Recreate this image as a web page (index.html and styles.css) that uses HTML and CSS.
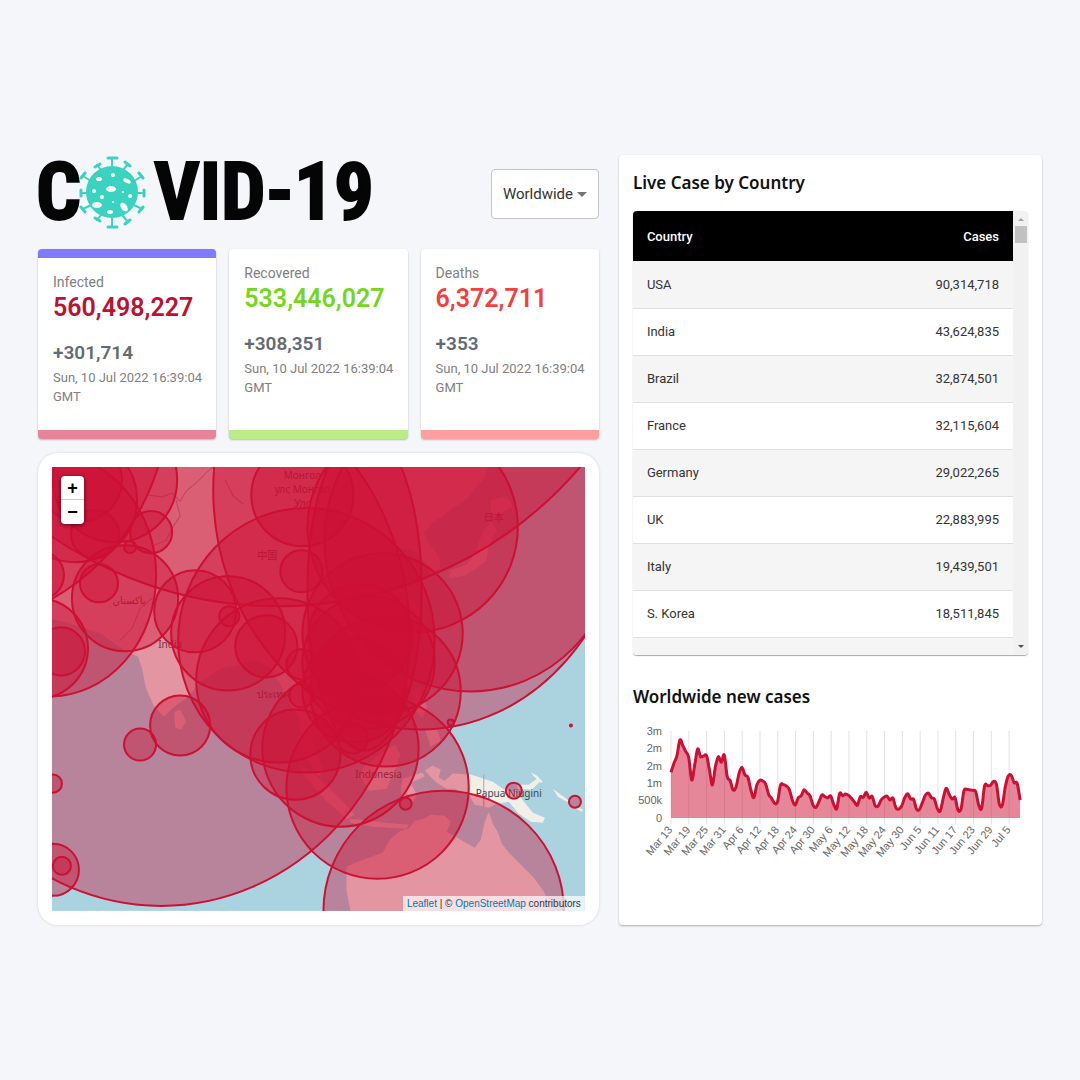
FILE: index.html
```html
<!DOCTYPE html>
<html lang="en">
<head>
<meta charset="utf-8">
<meta name="viewport" content="width=device-width, initial-scale=1">
<title>COVID-19 Tracker</title>
<link rel="stylesheet" href="styles.css">
</head>
<body>
<div class="app">
  <main class="app-left">
    <header class="app-header">
      <h1 class="logo" aria-label="COVID-19">
        <span class="logo-c">C</span>
        <svg class="logo-virus" viewBox="0 0 67 73" aria-hidden="true">
          <circle cx="33" cy="36" r="26" fill="#3ad3c0"/>
          <g stroke="#3ad3c0" stroke-width="2" stroke-linecap="round" fill="none">
            <path d="M33 12V2M33 60V71M9 37H2M58 37h7"/>
            <path d="M12 25L4 20M55 25l8-5M12 49l-8 4M55 49l8 4"/>
            <path d="M22 14l-4-5M44 14l5-6M22 59l-4 5M44 60l5 6"/>
          </g>
          <g stroke="#3ad3c0" stroke-width="3" stroke-linecap="round" fill="none">
            <path d="M29 2h9M29 71h9M2 34v6M65 34v6"/>
            <path d="M2 22L6 17M60 17l4 5M2 51l4 5M64 51l-4 5"/>
            <path d="M16 11l5-3M46 6l5 4M16 62l5 3M46 68l5-4"/>
          </g>
          <g fill="#fff">
            <ellipse cx="32" cy="33" rx="5" ry="3"/><ellipse cx="20" cy="23" rx="3" ry="2"/>
            <ellipse cx="34" cy="19" rx="2" ry="2"/><ellipse cx="48" cy="25" rx="4" ry="2" transform="rotate(25 48 25)"/>
            <ellipse cx="18" cy="49" rx="5" ry="3"/><ellipse cx="45" cy="51" rx="3" ry="5" transform="rotate(-35 45 51)"/>
            <ellipse cx="23" cy="41" rx="2" ry="2"/><ellipse cx="51" cy="40" rx="2" ry="2"/>
            <ellipse cx="31" cy="56" rx="3" ry="2"/><circle cx="15" cy="35" r="2"/><circle cx="44" cy="36" r="1"/><circle cx="34" cy="46" r="1"/>
          </g>
        </svg>
        <span>VID-19</span>
      </h1>
      <div class="picker">
        <select class="picker-select" aria-label="Country">
          <option>Worldwide</option>
        </select>
        <svg class="picker-arrow" viewBox="0 0 10 5" aria-hidden="true"><path d="M0 0h10L5 5z" fill="#757575"/></svg>
      </div>
    </header>

    <section class="stats">
      <article class="stat stat-infected">
        <h2 class="stat-label">Infected</h2>
        <p class="stat-total">560,498,227</p>
        <p class="stat-today">+301,714</p>
        <p class="stat-date">Sun, 10 Jul 2022 16:39:04 GMT</p>
      </article>
      <article class="stat stat-recovered">
        <h2 class="stat-label">Recovered</h2>
        <p class="stat-total">533,446,027</p>
        <p class="stat-today">+308,351</p>
        <p class="stat-date">Sun, 10 Jul 2022 16:39:04 GMT</p>
      </article>
      <article class="stat stat-deaths">
        <h2 class="stat-label">Deaths</h2>
        <p class="stat-total">6,372,711</p>
        <p class="stat-today">+353</p>
        <p class="stat-date">Sun, 10 Jul 2022 16:39:04 GMT</p>
      </article>
    </section>

    <section class="map-card">
      <div class="map">
        <svg class="map-canvas" viewBox="52 467 532 443" preserveAspectRatio="xMidYMid slice" role="img" aria-label="Map of cases">
          <rect x="52" y="467" width="532" height="443" fill="#aad3df"/>
          <g fill="#f2efe9">
            <path d="M40 460H487L484 478 473 490 466 499 450 510 432 523 423 533 430 545 438 556 440 568 430 574 424 562 414 552 404 548 398 556 406 564 400 574 408 592 418 610 414 634 400 652 380 664 360 670 346 674 338 684 344 698 348 716 340 730 328 738 318 722 312 716 310 738 316 752 324 770 318 776 308 760 302 742 298 716 290 704 280 684 268 666 254 660 240 664 220 668 200 682 188 696 176 705 172 708 164 716 154 706 146 688 142 668 138 656 128 652 118 646 102 634 84 628 66 622 40 616z"/>
            <path d="M174 712l6-3 6 12-5 8-6-2z"/>
            <path d="M482 532l8-10 6 8-8 16-2 14-10 8-14 8-14 2 2-8 16-6 8-10 4-12zM490 500l16-4 6 10-12 8-10-2z"/>
            <path d="M298 764l14 8 26 24 16 18-8 4-20-18-20-22zM350 818l34 4 24 2-2 4-34-2-22-4zM362 768l14-12 18-12 6 10-6 16-8 18-18 2-8-14zM402 778l20-6 2 4-14 6 6 12-4 8-6-10-4 8-2-12zM410 690l10-4 6 20-4 12-8-8zM424 728l12 0 4 12-10 6zM398 652l6-4 2 12-6 4z"/>
            <path d="M424 770l8-5 8 4-2 8 6 3 8-7 18 1 22 7 10 7 14 4 8 10 8 10 12 5-2 5-12-1-12-8-10-12-12 2-8 4-14-3-6-10-14-6-8 0-10-6z"/>
            <path d="M516 784l12 0 8-6 3 3-8 8-14-1zM530 772l6 3 6 6-2 1-7-6zM552 788l8 6 8 6-2 1-9-5zM576 806l6 3-1 2-6-3z"/>
            <path d="M346 866l14-6 22-8 8-14 10-8 8-2 6-8 10-2 6-4 14 1 6 6-4 10 14 8 14 8 6-8 4-18 4-10 4 12 5 8 4 12 8 10 12 12 12 12 10 14 6 12V910H350l-4-20z"/>
            <path d="M402 832l10-2 8 2-14 3z"/>
          </g>
          <g class="map-border">
            <path d="M148 495l14 2 10-4 8 8 6-10 14-12 8-8 10-8M176 500l4 16-8 12-6 12-14 6M120 640l12-12 8-20 12-10M483 774v32M225 480l8 16 10 8"/>
          </g>
          <g class="map-label">
            <text x="302" y="479">Монгол</text>
            <text x="302" y="493">улс Монгол</text>
            <text x="302" y="507">Улс</text>
            <text x="267" y="559">中国</text>
            <text x="129" y="604">پاکستان</text>
            <text x="170" y="648">India</text>
            <text x="493" y="521">日本</text>
            <text x="273" y="698">ประเทศ</text>
            <text x="378" y="777">Indonesia</text>
            <text x="508" y="796">Papua Niugini</text>
          </g>
          <g class="map-cases">
            <ellipse cx="161" cy="635" rx="248" ry="270"/>
            <circle cx="277" cy="208" r="398"/>
            <ellipse cx="420" cy="490" rx="207" ry="239"/>
            <ellipse cx="470" cy="540" rx="146" ry="151"/>
            <ellipse cx="50" cy="575" rx="106" ry="121"/>
            <circle cx="-60" cy="400" r="228"/>
            <circle cx="443" cy="910" r="120"/>
            <ellipse cx="306" cy="640" rx="128" ry="132"/>
            <circle cx="412" cy="527" r="105"/>
            <circle cx="377" cy="787" r="91"/>
            <circle cx="278" cy="680" r="82"/>
            <circle cx="382" cy="633" r="80"/>
            <circle cx="340" cy="748" r="78"/>
            <circle cx="385" cy="691" r="75"/>
            <ellipse cx="364" cy="590" rx="57" ry="160"/>
            <circle cx="368" cy="662" r="66"/>
            <circle cx="354" cy="690" r="52"/>
            <circle cx="360" cy="636" r="52"/>
            <circle cx="115" cy="480" r="62"/>
            <circle cx="75" cy="500" r="62"/>
            <circle cx="80" cy="480" r="42"/>
            <circle cx="228" cy="633" r="57"/>
            <circle cx="125" cy="598" r="53"/>
            <circle cx="302" cy="495" r="51"/>
            <circle cx="38" cy="648" r="50"/>
            <circle cx="295" cy="754" r="45"/>
            <circle cx="195" cy="611" r="41"/>
            <circle cx="266" cy="646" r="31"/>
            <circle cx="180" cy="725" r="30"/>
            <circle cx="53" cy="869" r="26"/>
            <circle cx="95" cy="534" r="24"/>
            <circle cx="40" cy="575" r="24"/>
            <circle cx="61" cy="651" r="24"/>
            <circle cx="301" cy="571" r="21"/>
            <circle cx="151" cy="532" r="21"/>
            <circle cx="99" cy="583" r="19"/>
            <circle cx="140" cy="744" r="16"/>
            <circle cx="301" cy="664" r="15"/>
            <circle cx="352" cy="738" r="15"/>
            <circle cx="301" cy="695" r="12"/>
            <circle cx="229" cy="616" r="10"/>
            <circle cx="53" cy="783" r="9"/>
            <circle cx="62" cy="865" r="9"/>
            <circle cx="513" cy="790" r="8"/>
            <circle cx="574" cy="801" r="6"/>
            <circle cx="405" cy="803" r="6"/>
            <circle cx="130" cy="547" r="6"/>
            <circle cx="450" cy="722" r="3"/>
            <circle cx="570" cy="725" r="1"/>
          </g>
        </svg>
        <div class="map-zoom">
          <button class="map-zoom-button" type="button" aria-label="Zoom in">+</button>
          <button class="map-zoom-button" type="button" aria-label="Zoom out">−</button>
        </div>
        <p class="map-credit"><a href="#leaflet">Leaflet</a> | © <a href="#osm">OpenStreetMap</a> contributors</p>
      </div>
    </section>
  </main>

  <aside class="app-right">
    <h2 class="panel-title">Live Case by Country</h2>
    <div class="table-frame">
      <div class="table-scroll">
        <table class="cases">
          <thead><tr><th scope="col">Country</th><th scope="col">Cases</th></tr></thead>
          <tbody>
            <tr><td>USA</td><td>90,314,718</td></tr>
            <tr><td>India</td><td>43,624,835</td></tr>
            <tr><td>Brazil</td><td>32,874,501</td></tr>
            <tr><td>France</td><td>32,115,604</td></tr>
            <tr><td>Germany</td><td>29,022,265</td></tr>
            <tr><td>UK</td><td>22,883,995</td></tr>
            <tr><td>Italy</td><td>19,439,501</td></tr>
            <tr><td>S. Korea</td><td>18,511,845</td></tr>
            <tr><td></td><td></td></tr>
          </tbody>
        </table>
      </div>
      <div class="scrollbar" aria-hidden="true">
        <svg class="scrollbar-arrow" viewBox="0 0 8 4"><path d="M0 4L4 0l4 4z" fill="#a3a3a3"/></svg>
        <span class="scrollbar-thumb"></span>
        <svg class="scrollbar-arrow scrollbar-arrow-down" viewBox="0 0 8 4"><path d="M0 0h8L4 4z" fill="#505050"/></svg>
      </div>
    </div>
    <h2 class="panel-title">Worldwide new cases</h2>
    <svg class="chart" viewBox="0 5 395 140" role="img" aria-label="Worldwide new cases per day">
      <g class="chart-grid"></g>
      <path class="chart-area"/>
      <path class="chart-line"/>
      <g class="chart-y">
        <text x="29" y="15">3m</text>
        <text x="29" y="32">2m</text>
        <text x="29" y="50">2m</text>
        <text x="29" y="67">1m</text>
        <text x="29" y="84">500k</text>
        <text x="29" y="102">0</text>
      </g>
      <g class="chart-x"></g>
    </svg>
  </aside>
</div>
<script src="script.js"></script>
</body>
</html>
```

FILE: styles.css
```css
* {
  box-sizing: border-box;
  margin: 0;
}

body {
  background: #f5f6fa;
  font-family: Roboto, "Liberation Sans", sans-serif;
  color: #212121;
}

.app {
  display: grid;
  grid-template-columns: 57fr 43fr;
  gap: 20px;
  align-content: center;
  min-height: 100vh;
  padding: 20px 38px;
}

.app-left {
  display: flex;
  flex-direction: column;
  min-width: 0;
}

.app-header {
  display: flex;
  align-items: center;
  justify-content: space-between;
  height: 74px;
  margin-bottom: 20px;
}

.logo {
  display: flex;
  align-items: center;
  font-family: "Liberation Sans Narrow", "Roboto Condensed", "Open Sans Condensed", "Liberation Sans", sans-serif;
  font-size: 79px;
  font-weight: 700;
  line-height: 74px;
  color: #050505;
  -webkit-text-stroke: 2px #050505;
}

.logo-c {
  width: 43px;
  margin-left: -2px;
}

.logo-virus {
  width: 67px;
  height: 73px;
  margin-right: 8px;
}

.picker {
  position: relative;
  margin-top: 4px;
}

.picker-select {
  appearance: none;
  width: 108px;
  height: 50px;
  padding: 0 22px 0 11px;
  border: 1px solid #c4c4c4;
  border-radius: 4px;
  background: #fff;
  font: 400 15px Roboto, sans-serif;
  color: #333;
}

.picker-arrow {
  position: absolute;
  top: 23px;
  right: 12px;
  width: 10px;
  height: 5px;
}

.stats {
  display: grid;
  grid-template-columns: repeat(3, 1fr);
  gap: 13px;
  margin-bottom: 14px;
}

.stat {
  min-height: 190px;
  padding: 14px 10px 14px 15px;
  border-bottom: 9px solid;
  border-radius: 4px;
  background: #fff;
  box-shadow: 0 1px 2px rgba(0, 0, 0, 0.25);
}

.stat-infected {
  border-top: 9px solid #807aff;
  border-bottom-color: #e6849a;
}

.stat-recovered {
  border-bottom-color: #bcec88;
}

.stat-deaths {
  border-bottom-color: #fd9f9f;
}

.stat-label {
  font-size: 14px;
  font-weight: 400;
  line-height: 20px;
  color: #808080;
}

.stat-total {
  margin-bottom: 16px;
  font-size: 25px;
  font-weight: 600;
  line-height: 32px;
}

.stat-infected .stat-total {
  color: #c0102f;
}

.stat-recovered .stat-total {
  color: #77d51c;
}

.stat-deaths .stat-total {
  color: #f43f3f;
}

.stat-today {
  margin-bottom: 2px;
  font-size: 19px;
  font-weight: 600;
  line-height: 26px;
  color: #646a72;
}

.stat-date {
  font-size: 13px;
  line-height: 19px;
  color: #808080;
}

.map-card {
  padding: 14px;
  border-radius: 20px;
  background: #fff;
  box-shadow: 0 0 3px rgba(0, 0, 0, 0.15);
}

.map {
  position: relative;
}

.map-canvas {
  display: block;
  width: 100%;
  aspect-ratio: 533 / 444;
}

.map-border {
  fill: none;
  stroke: #b79ab5;
  stroke-width: 1;
}

.map-label {
  font-family: "Noto Sans", "Noto Sans CJK SC", "DejaVu Sans", sans-serif;
  font-size: 10px;
  text-anchor: middle;
  fill: #444;
}

.map-cases {
  fill: #cc1034;
  fill-opacity: 0.4;
  stroke: #cc1034;
  stroke-width: 2;
}

.map-zoom {
  position: absolute;
  top: 9px;
  left: 9px;
  display: flex;
  flex-direction: column;
  border-radius: 4px;
  overflow: hidden;
  box-shadow: 0 1px 4px rgba(0, 0, 0, 0.65);
}

.map-zoom-button {
  width: 23px;
  height: 24px;
  padding: 0;
  border: 0;
  border-bottom: 1px solid #ccc;
  background: #fff;
  font: 700 18px/22px "Liberation Sans", sans-serif;
  color: #000;
}

.map-zoom-button:last-child {
  border-bottom: 0;
}

.map-credit {
  position: absolute;
  right: 0;
  bottom: 0;
  padding: 0 4px;
  background: rgba(255, 255, 255, 0.7);
  font: 400 10px/15px "Liberation Sans", sans-serif;
  color: #333;
}

.map-credit a {
  color: #0078a8;
  text-decoration: none;
}

.app-right {
  display: flex;
  flex-direction: column;
  min-width: 0;
  padding: 14px;
  border-radius: 4px;
  background: #fff;
  box-shadow: 0 1px 2px rgba(0, 0, 0, 0.3);
}

.panel-title {
  margin-bottom: 14px;
  font-family: "Noto Sans", "Open Sans", sans-serif;
  font-size: 17px;
  font-weight: 600;
  line-height: 28px;
  color: #111;
}

.table-frame {
  display: flex;
  height: 444px;
  margin-bottom: 28px;
  border-radius: 4px;
  overflow: hidden;
  box-shadow: 0 1px 1px rgba(0, 0, 0, 0.35);
}

.table-scroll {
  flex: 1;
  overflow-y: auto;
  scrollbar-width: none;
}

.cases {
  width: 100%;
  border-collapse: collapse;
  font-size: 13px;
}

.cases th {
  height: 50px;
  padding: 0 14px;
  background: #000;
  font-weight: 500;
  color: #fff;
  text-align: left;
}

.cases td {
  height: 47px;
  padding: 0 14px;
  border-bottom: 1px solid #e0e0e0;
  color: #333;
}

.cases th:last-child,
.cases td:last-child {
  text-align: right;
}

.cases tbody tr:nth-child(odd) {
  background: #f5f5f5;
}

.scrollbar {
  display: flex;
  flex-direction: column;
  align-items: center;
  width: 15px;
  padding: 7px 0;
  background: #f1f1f1;
}

.scrollbar-arrow {
  width: 6px;
  height: 3px;
}

.scrollbar-arrow-down {
  margin-top: auto;
}

.scrollbar-thumb {
  width: 12px;
  height: 17px;
  margin-top: 5px;
  background: #c1c1c1;
}

.chart {
  display: block;
  width: 100%;
}

.chart-grid {
  stroke: #e2e2e2;
  stroke-width: 1;
}

.chart-area {
  fill: #cc1034;
  fill-opacity: 0.5;
}

.chart-line {
  fill: none;
  stroke: #cc1034;
  stroke-width: 3;
  stroke-linejoin: round;
}

.chart-x,
.chart-y {
  font-family: "Liberation Sans", sans-serif;
  font-size: 11px;
  text-anchor: end;
  fill: #666;
}
```

FILE: script.js
```js
// New cases per day, in thousands, from Mar 13.
const cases = [
  1575, 1885, 2149, 2690, 2494, 2287, 2080, 1310, 1828, 2379, 2115, 2138, 2149, 1655, 1138, 1770,
  2115, 1920, 2172, 1425, 1287, 966, 1080, 1540, 1747, 1483, 1402, 966, 701, 1138, 1299, 1276, 1172,
  816, 678, 506, 563, 1138, 1149, 1103, 977, 621, 448, 701, 770, 977, 862, 759, 448, 368, 563, 793,
  736, 701, 759, 470, 322, 850, 770, 828, 782, 678, 552, 448, 736, 713, 885, 690, 747, 425, 414, 621,
  713, 759, 621, 690, 356, 310, 425, 701, 839, 655, 644, 299, 299, 540, 793, 862, 701, 655, 333, 241,
  678, 1023, 816, 655, 701, 276, 299, 931, 989, 966, 954, 908, 448, 333, 1115, 1115, 1126, 1264,
  1160, 470, 448, 1080, 1448, 1470, 1218, 1195, 621
];
const labels = [
  "Mar 13", "Mar 19", "Mar 25", "Mar 31", "Apr 6", "Apr 12", "Apr 18", "Apr 24", "Apr 30", "May 6",
  "May 12", "May 18", "May 24", "May 30", "Jun 5", "Jun 11", "Jun 17", "Jun 23", "Jun 29", "Jul 5"
];
const left = 38, right = 387, base = 98, height = 87, top3m = 3000;
const step = (right - left) / (cases.length - 1);
const pts = cases.map((v, i) => [left + i * step, base - v / top3m * height]);

let line = `M${pts[0]}`;
for (let i = 1; i < pts.length; i++) {
  const before = pts[Math.max(i - 2, 0)], a = pts[i - 1], b = pts[i], after = pts[Math.min(i + 1, pts.length - 1)];
  line += `C${a[0] + (b[0] - before[0]) / 6},${a[1] + (b[1] - before[1]) / 6} ` +
          `${b[0] - (after[0] - a[0]) / 6},${b[1] - (after[1] - a[1]) / 6} ${b}`;
}
document.querySelector(".chart-line").setAttribute("d", line);
document.querySelector(".chart-area").setAttribute("d", `${line}V${base}H${left}Z`);

const gap = 338 / 19;
document.querySelector(".chart-grid").innerHTML =
  labels.map((_, i) => `<path d="M${left + i * gap} 11V104"/>`).join("");
document.querySelector(".chart-x").innerHTML =
  labels.map((t, i) => `<text transform="translate(${left + i * gap + 2} 110) rotate(-50)">${t}</text>`).join("");
```
